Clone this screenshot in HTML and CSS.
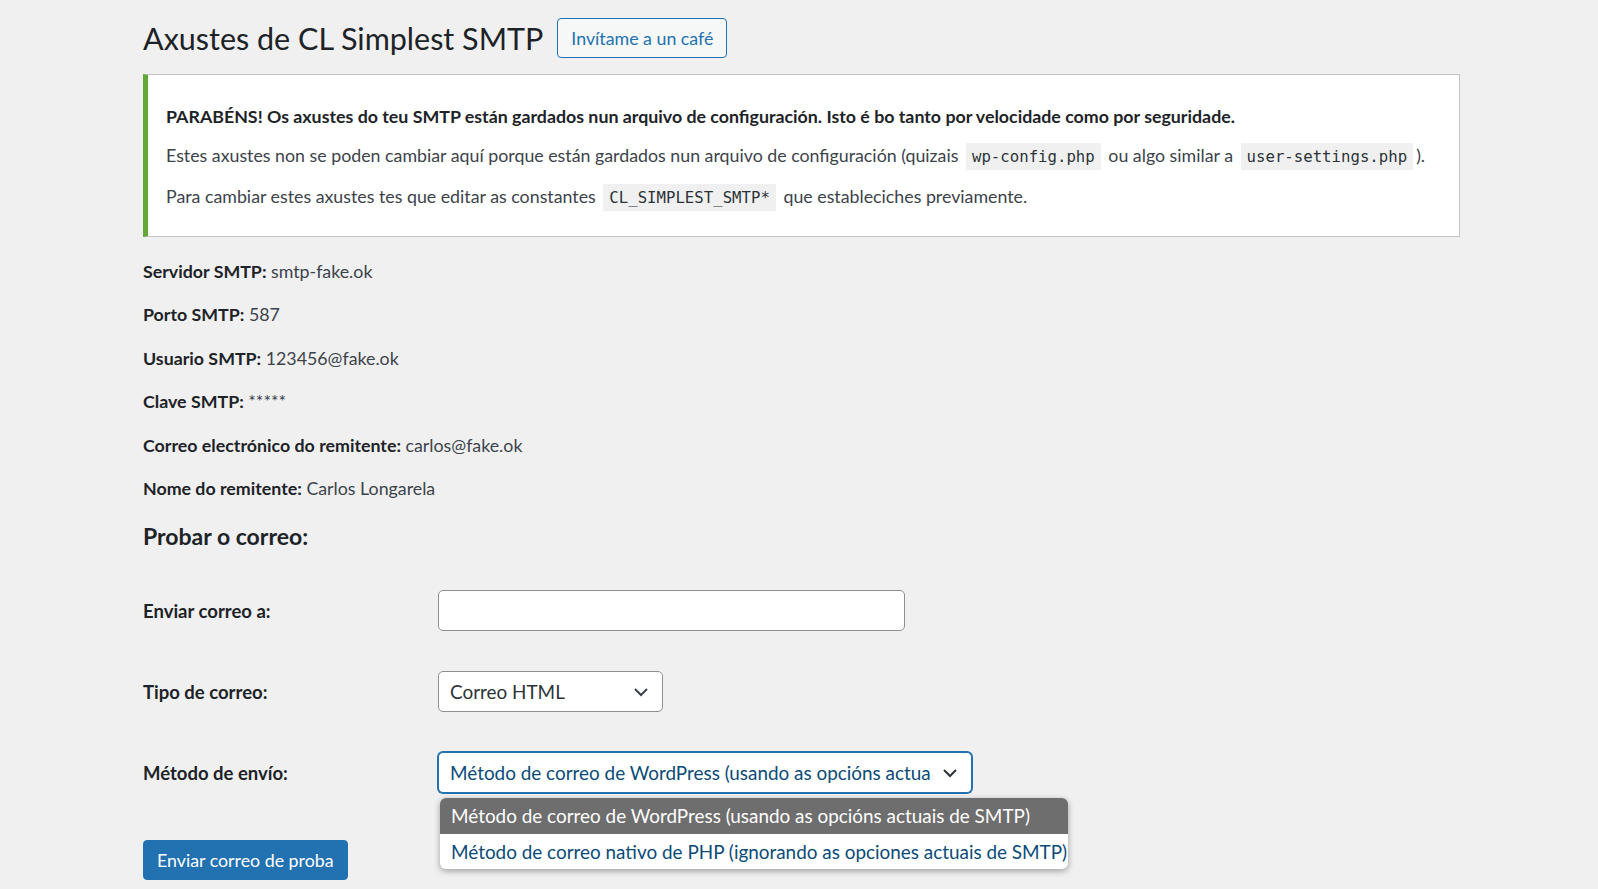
FILE: index.html
```html
<!DOCTYPE html>
<html lang="gl">
<head>
<meta charset="utf-8">
<title>Axustes de CL Simplest SMTP</title>
<link rel="stylesheet" href="styles.css">
</head>
<body>
<div class="wrap">
  <div class="page-head">
    <h1 class="page-title">Axustes de CL Simplest SMTP</h1>
    <a class="btn-secondary" href="#">Invítame a un café</a>
  </div>

  <div class="notice">
    <p class="notice-strong">PARABÉNS! Os axustes do teu SMTP están gardados nun arquivo de configuración. Isto é bo tanto por velocidade como por seguridade.</p>
    <p>Estes axustes non se poden cambiar aquí porque están gardados nun arquivo de configuración (quizais <code>wp-config.php</code> ou algo similar a <code>user-settings.php</code>).</p>
    <p>Para cambiar estes axustes tes que editar as constantes <code>CL_SIMPLEST_SMTP*</code> que estableciches previamente.</p>
  </div>

  <div class="info">
    <p><strong>Servidor SMTP:</strong> smtp-fake.ok</p>
    <p><strong>Porto SMTP:</strong> 587</p>
    <p><strong>Usuario SMTP:</strong> 123456@fake.ok</p>
    <p><strong>Clave SMTP:</strong> *****</p>
    <p><strong>Correo electrónico do remitente:</strong> carlos@fake.ok</p>
    <p><strong>Nome do remitente:</strong> Carlos Longarela</p>
  </div>

  <h2 class="section-title">Probar o correo:</h2>

  <div class="form-table">
    <div class="form-row">
      <div class="form-label">Enviar correo a:</div>
      <div class="form-field"><div class="text-input"></div></div>
    </div>
    <div class="form-row">
      <div class="form-label">Tipo de correo:</div>
      <div class="form-field">
        <div class="select select-type">
          <span class="select-text">Correo HTML</span>
          <svg class="chev" width="16" height="10" viewBox="0 0 16 10"><polyline points="2,2 8,8 14,2" fill="none" stroke="#3c434a" stroke-width="2"/></svg>
        </div>
      </div>
    </div>
    <div class="form-row">
      <div class="form-label">Método de envío:</div>
      <div class="form-field">
        <div class="select select-method is-focus">
          <span class="select-text">Método de correo de WordPress (usando as opcións actuais de SMTP)</span>
          <svg class="chev" width="16" height="10" viewBox="0 0 16 10"><polyline points="2,2 8,8 14,2" fill="none" stroke="#2c3338" stroke-width="2"/></svg>
          <div class="dropdown">
            <div class="option is-active">Método de correo de WordPress (usando as opcións actuais de SMTP)</div>
            <div class="option">Método de correo nativo de PHP (ignorando as opciones actuais de SMTP)</div>
          </div>
        </div>
      </div>
    </div>
  </div>

  <div class="submit-row">
    <a class="btn-primary" href="#">Enviar correo de proba</a>
  </div>
</div>
</body>
</html>
```

FILE: styles.css
```css
html, body {
  margin: 0;
  padding: 0;
  background: #f0f0f1;
  height: 100%;
  overflow: hidden;
}
body {
  font-family: Lato, "Noto Sans", sans-serif;
  font-size: 17.8px;
  color: #3c434a;
}
.wrap {
  padding: 18px 0 0 143px;
  width: 1317px;
}
.page-head {
  display: flex;
  align-items: center;
  gap: 14px;
  height: 40px;
}
.page-title {
  margin: 0;
  font-size: 30.5px;
  font-weight: 400;
  color: #1d2327;
  line-height: 40px;
}
.btn-secondary {
  display: inline-flex;
  align-items: center;
  height: 38px;
  padding: 0 13px;
  border: 1px solid #2271b1;
  border-radius: 4px;
  background: #f6f7f7;
  color: #2271b1;
  text-decoration: none;
  font-size: 17.8px;
}
.notice {
  margin-top: 16px;
  background: #fff;
  border: 1px solid #c3c4c7;
  border-left: 5px solid #5fa936;
  padding: 27px 18px 20px 18px;
  box-sizing: border-box;
  height: 163px;
}
.notice p {
  margin: 0 0 11px 0;
  line-height: 28px;
  white-space: nowrap;
}
.notice p:last-child { margin-bottom: 0; }
.notice-strong {
  font-weight: 700;
  color: #1d2327;
}
code {
  font-family: "DejaVu Sans Mono", "Liberation Mono", monospace;
  font-size: 15.7px;
  background: #f0f0f1;
  padding: 4px 6px;
  margin: 0 3px;
  color: #2c3338;
}
.info {
  margin-top: 20px;
}
.info p {
  margin: 0;
  line-height: 28px;
  padding: 0 0 15.4px 0;
}
.info strong {
  font-weight: 700;
  color: #1d2327;
}
.section-title {
  margin: 3px 0 0 0;
  font-size: 23px;
  font-weight: 700;
  color: #1d2327;
  line-height: 32px;
}
.form-table {
  margin-top: 38px;
  display: flex;
  flex-direction: column;
  gap: 40px;
}
.form-row {
  display: flex;
  align-items: center;
  height: 41px;
}
.form-label {
  width: 295px;
  font-weight: 700;
  font-size: 18.5px;
  color: #1d2327;
  flex: none;
}
.form-field {
  flex: none;
}
.text-input {
  width: 465px;
  height: 39px;
  background: #fff;
  border: 1px solid #8c8f94;
  border-radius: 5px;
}
.select {
  position: relative;
  display: flex;
  align-items: center;
  height: 39px;
  background: #fff;
  border: 1px solid #8c8f94;
  border-radius: 5px;
  padding: 0 40px 0 11px;
  box-sizing: content-box;
  color: #2c3338;
  font-size: 18.9px;
}
.select-type { width: 172px; }
.select-method {
  width: 481px;
}
.is-focus {
  border-color: #2271b1;
  box-shadow: 0 0 0 1px #2271b1;
  color: #0a4b78;
}
.select-text {
  white-space: nowrap;
  overflow: hidden;
  display: block;
  width: 100%;
}
.chev {
  position: absolute;
  right: 13px;
  top: 15px;
}
.dropdown {
  position: absolute;
  left: 1px;
  top: 45px;
  width: 628px;
  background: #fff;
  border-radius: 6px;
  box-shadow: 0 2px 6px rgba(0,0,0,0.35);
  overflow: hidden;
  z-index: 5;
}
.option {
  height: 35.5px;
  line-height: 35.5px;
  padding: 0 11px;
  white-space: nowrap;
  color: #0a4b78;
  font-size: 18.9px;
}
.option.is-active {
  background: #6e6e6e;
  color: #fff;
}
.submit-row {
  margin-top: 47px;
}
.btn-primary {
  display: inline-flex;
  align-items: center;
  height: 38px;
  padding: 0 13px;
  background: #2271b1;
  border: 1px solid #2271b1;
  border-radius: 4px;
  color: #fff;
  text-decoration: none;
  font-size: 17.8px;
}
```
